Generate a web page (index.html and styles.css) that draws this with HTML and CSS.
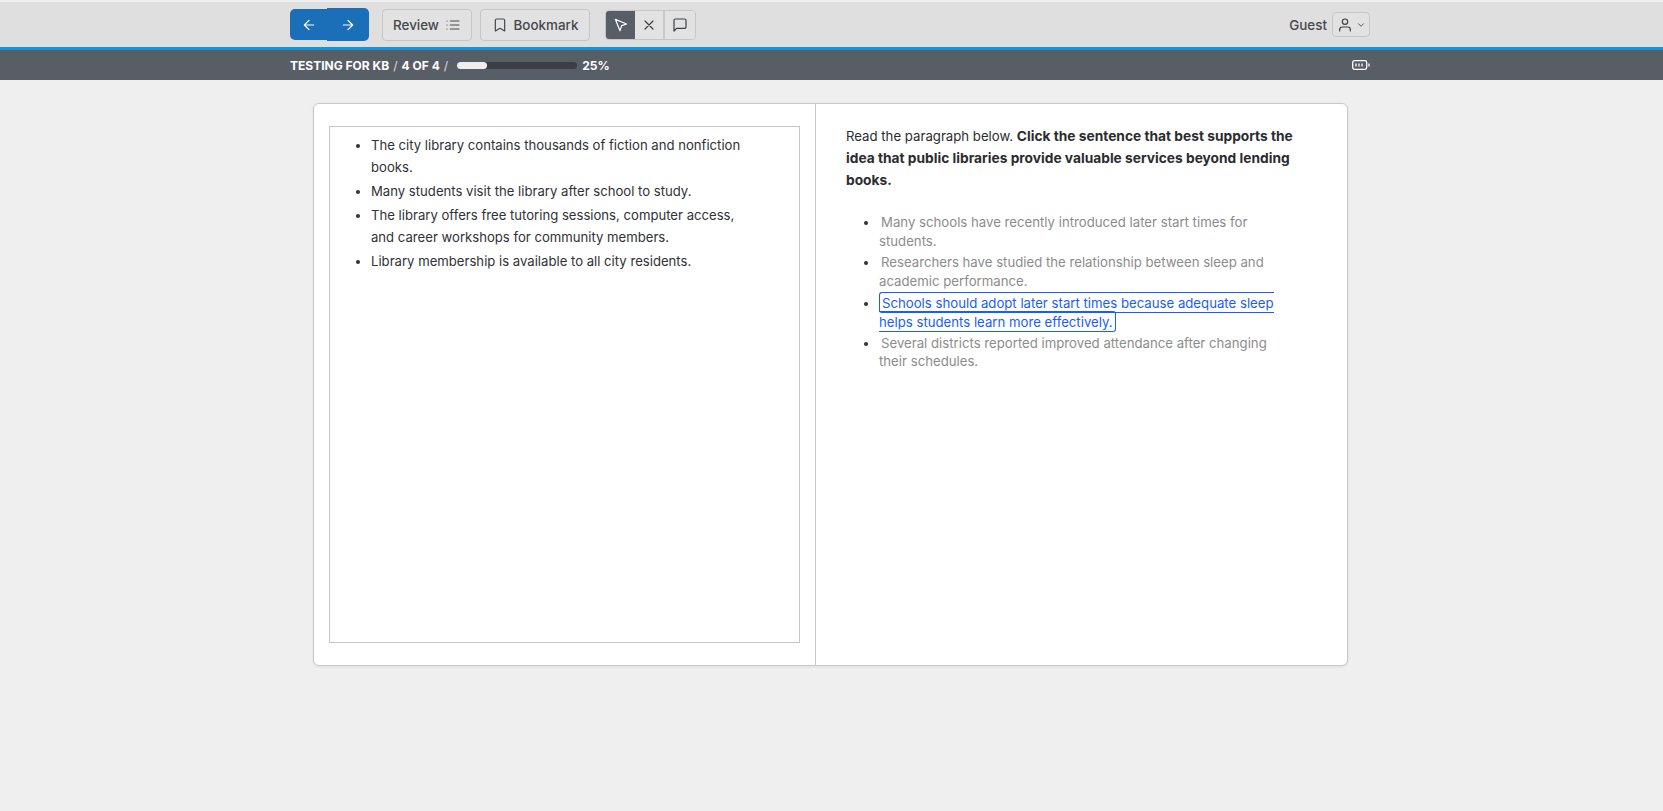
FILE: index.html
```html
<!DOCTYPE html>
<html lang="en">
<head>
<meta charset="utf-8">
<title>Testing for KB</title>
<link rel="stylesheet" href="styles.css">
</head>
<body>
<header class="topbar">
  <div class="nav-group">
    <button class="nav-btn nav-prev" aria-label="Previous">
      <svg class="ic" viewBox="0 0 24 24"><path d="M19 12H5M12 5l-7 7 7 7"/></svg>
    </button>
    <button class="nav-btn nav-next" aria-label="Next">
      <svg class="ic" viewBox="0 0 24 24"><path d="M5 12h14M12 5l7 7-7 7"/></svg>
    </button>
  </div>
  <button class="tool-btn review">Review
    <svg class="ic" viewBox="0 0 24 24"><path d="M8 6h13M8 12h13M8 18h13M3 6h.01M3 12h.01M3 18h.01"/></svg>
  </button>
  <button class="tool-btn bookmark">
    <svg class="ic" viewBox="0 0 24 24"><path d="M19 21l-7-4-7 4V5a2 2 0 0 1 2-2h10a2 2 0 0 1 2 2z"/></svg>
    Bookmark
  </button>
  <div class="seg">
    <button class="seg-btn active" aria-label="Select">
      <svg class="ic" viewBox="0 0 24 24"><path d="M3.5 3.5l7 17 2.5-7.5 7.5-2.500z"/></svg>
    </button>
    <button class="seg-btn" aria-label="Eliminate">
      <svg class="ic" viewBox="0 0 24 24"><path d="M18 6L6 18M6 6l12 12"/></svg>
    </button>
    <button class="seg-btn" aria-label="Comment">
      <svg class="ic" viewBox="0 0 24 24"><path d="M21 15a2 2 0 0 1-2 2H7l-4 4V5a2 2 0 0 1 2-2h14a2 2 0 0 1 2 2z"/></svg>
    </button>
  </div>
  <div class="user">
    <span class="guest">Guest</span>
    <button class="user-btn" aria-label="User menu">
      <svg class="ic" viewBox="0 0 24 24"><path d="M20 21v-2a4 4 0 0 0-4-4H8a4 4 0 0 0-4 4v2"/><circle cx="12" cy="7" r="4"/></svg>
      <svg class="chev" viewBox="0 0 24 24"><path d="M6 9l6 6 6-6"/></svg>
    </button>
  </div>
</header>
<div class="statusbar">
  <span class="crumb">TESTING FOR KB</span><span class="sep">/</span><span class="crumb">4 OF 4</span><span class="sep">/</span>
  <div class="progress"><div class="progress-fill"></div></div>
  <span class="crumb pct">25%</span>
  <svg class="battery" viewBox="0 0 18 10"><rect x="0.7" y="0.7" width="14" height="8.600" rx="1.800"/><path d="M4 3.500v3M7 3.500v3M10 3.500v3M17 3.500v3"/></svg>
</div>
<main class="card">
  <section class="pane-left">
    <div class="passage">
      <ul class="passage-list">
        <li>The city library contains thousands of fiction and nonfiction books.</li>
        <li>Many students visit the library after school to study.</li>
        <li>The library offers free tutoring sessions, computer access, and career workshops for community members.</li>
        <li>Library membership is available to all city residents.</li>
      </ul>
    </div>
  </section>
  <section class="pane-right">
    <p class="question">Read the paragraph below. <strong>Click the sentence that best supports the idea that public libraries provide valuable services beyond lending books.</strong></p>
    <ul class="choices">
      <li><span class="choice">Many schools have recently introduced later start times for students.</span></li>
      <li><span class="choice">Researchers have studied the relationship between sleep and academic performance.</span></li>
      <li><span class="choice selected">Schools should adopt later start times because adequate sleep helps students learn more effectively.</span></li>
      <li><span class="choice">Several districts reported improved attendance after changing their schedules.</span></li>
    </ul>
  </section>
</main>
</body>
</html>
```
FILE: styles.css
```css
* { box-sizing: border-box; }
html, body { margin: 0; height: 100%; }
body {
  background: #efefef;
  font-family: Inter, "Noto Sans", sans-serif;
  color: #2f3136;
  overflow: hidden;
}
button { font: inherit; color: inherit; cursor: pointer; padding: 0; }
.ic {
  width: 16px; height: 16px; fill: none; stroke: currentColor;
  stroke-width: 1.800; stroke-linecap: round; stroke-linejoin: round; flex: none;
}

.topbar {
  height: 45px;
  margin-top: 2px;
  background: #dfdfdf;
  display: flex;
  align-items: center;
  padding: 0 293px 0 290px;
}
.nav-group { display: flex; align-items: center; color: #fff; }
.nav-btn { border: 0; background: #1a6fb8; display: flex; align-items: center; justify-content: center; }
.nav-prev { width: 37px; height: 31px; border-radius: 5px 0 0 5px; }
.nav-next { width: 42px; height: 33px; border-radius: 0 5px 5px 0; }

.tool-btn {
  height: 32px;
  border: 1px solid #c6c6c6;
  border-radius: 4px;
  background: #e2e2e2;
  display: flex; align-items: center; justify-content: center;
  gap: 6px;
  font-size: 13.400px;
  font-weight: 500;
  color: #45484d;
}
.review { width: 90px; margin-left: 13px; }
.bookmark { width: 110px; margin-left: 8px; }

.seg {
  display: flex; margin-left: 15px; height: 30px;
  border: 1px solid #c6c6c6; border-radius: 4px; overflow: hidden;
}
.seg-btn {
  width: 30px; border: 0; border-right: 2px solid #c9c9c9; background: #e2e2e2;
  display: flex; align-items: center; justify-content: center; color: #3d4045;
}
.seg-btn:last-child { border-right: 0; }
.seg-btn.active { width: 29px; background: #585e65; color: #fff; border-right: 0; }

.user { margin-left: auto; display: flex; align-items: center; gap: 5px; }
.guest { font-size: 13.400px; font-weight: 500; color: #45484d; }
.user-btn {
  width: 38px; height: 25px;
  border: 1px solid #c6c6c6; border-radius: 4px; background: #e2e2e2;
  display: flex; align-items: center; justify-content: center; gap: 3px; color: #3d4045;
}
.chev { width: 10px; height: 10px; fill: none; stroke: currentColor; stroke-width: 2; stroke-linecap: round; stroke-linejoin: round; }

.statusbar {
  height: 33px;
  border-top: 3px solid #0d96e2;
  background: #585e65;
  display: flex; align-items: center;
  padding: 0 293px 0 290px;
  color: #fff;
  font-size: 12px; font-weight: 700;
}
.sep { margin: 0 4px; color: #c9ccd0; font-weight: 500; }
.progress { width: 120px; height: 7px; margin-left: 5px; border-radius: 4px; background: #3b3f46; }
.progress-fill { width: 30px; height: 100%; border-radius: 4px; background: #eeeeee; }
.pct { margin-left: 5px; }
.battery { width: 18px; height: 10px; margin-left: auto; fill: none; stroke: #fff; stroke-width: 1.300; }

.card {
  display: flex;
  height: 563px;
  margin: 23px 315px 0 313px;
  background: #fff;
  border: 1px solid #c9c9c9;
  border-radius: 6px;
  box-shadow: 0 1px 3px rgba(0,0,0,.08);
}
.pane-left { width: 502px; padding: 22px 15px 22px 15px; border-right: 1px solid #c9c9c9; }
.passage { height: 100%; border: 1px solid #c6c6c6; }
.passage-list {
  margin: 0; padding: 8px 48px 0 41px;
  font-size: 13.130px; line-height: 21.700px;
}
.passage-list li { margin-bottom: 2.600px; }
.pane-right { flex: 1; padding: 22px 50px 0 30px; }
.question { margin: 0; font-size: 13.200px; line-height: 21.800px; color: #2a2c30; }
.question strong { font-size: 13.750px; font-weight: 700; }
.choices {
  margin: 22px 0 0; padding: 0 18px 0 33px;
  font-size: 13.200px; line-height: 18.700px; color: #2f3136;
}
.choices li { margin-bottom: 2.700px; }
.choice { color: #8c8c8c; padding: 0 2px; }
.choice.selected {
  color: #1a5cff;
  border: 1px solid #1a5cff;
  border-radius: 3px;
  padding: 1.500px 2px;
}
```
